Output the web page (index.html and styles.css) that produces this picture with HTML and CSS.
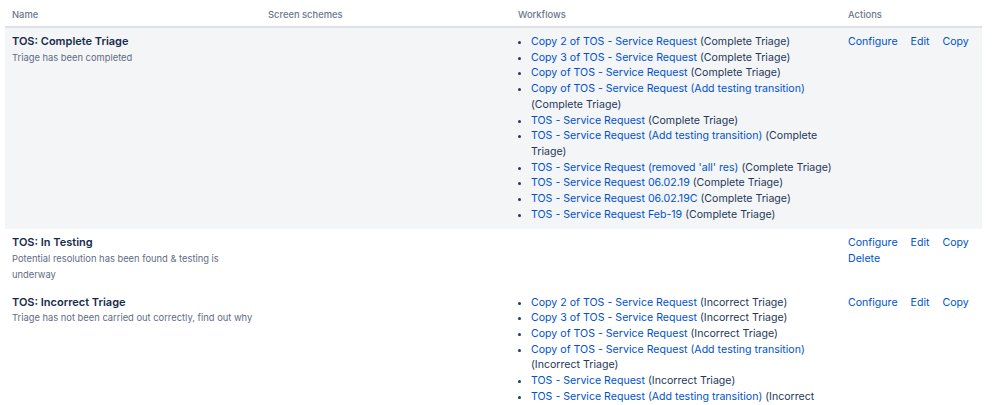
FILE: index.html
```html
<!DOCTYPE html>
<html lang="en">
<head>
<meta charset="utf-8">
<link rel="stylesheet" href="styles.css">
</head>
<body>
<table class="statuses">
  <thead>
    <tr>
      <th class="c-name">Name</th>
      <th class="c-screen">Screen schemes</th>
      <th class="c-wf">Workflows</th>
      <th class="c-act">Actions</th>
    </tr>
  </thead>
  <tbody>
    <tr class="shaded">
      <td class="c-name"><div class="title">TOS: Complete Triage</div><div class="desc">Triage has been completed</div></td>
      <td class="c-screen"></td>
      <td class="c-wf">
        <ul class="wf">
          <li><a href="#">Copy 2 of TOS - Service Request</a> (Complete Triage)</li>
          <li><a href="#">Copy 3 of TOS - Service Request</a> (Complete Triage)</li>
          <li><a href="#">Copy of TOS - Service Request</a> (Complete Triage)</li>
          <li><a href="#">Copy of TOS - Service Request (Add testing transition)</a> (Complete Triage)</li>
          <li><a href="#">TOS - Service Request</a> (Complete Triage)</li>
          <li><a href="#">TOS - Service Request (Add testing transition)</a> (Complete Triage)</li>
          <li><a href="#">TOS - Service Request (removed 'all' res)</a> (Complete Triage)</li>
          <li><a href="#">TOS - Service Request 06.02.19</a> (Complete Triage)</li>
          <li><a href="#">TOS - Service Request 06.02.19C</a> (Complete Triage)</li>
          <li><a href="#">TOS - Service Request Feb-19</a> (Complete Triage)</li>
        </ul>
      </td>
      <td class="c-act"><div class="actions"><a href="#">Configure</a><a href="#">Edit</a><a href="#">Copy</a></div></td>
    </tr>
    <tr>
      <td class="c-name"><div class="title">TOS: In Testing</div><div class="desc">Potential resolution has been found &amp; testing is underway</div></td>
      <td class="c-screen"></td>
      <td class="c-wf"></td>
      <td class="c-act"><div class="actions"><a href="#">Configure</a><a href="#">Edit</a><a href="#">Copy</a><a href="#">Delete</a></div></td>
    </tr>
    <tr>
      <td class="c-name"><div class="title">TOS: Incorrect Triage</div><div class="desc">Triage has not been carried out correctly, find out why</div></td>
      <td class="c-screen"></td>
      <td class="c-wf">
        <ul class="wf">
          <li><a href="#">Copy 2 of TOS - Service Request</a> (Incorrect Triage)</li>
          <li><a href="#">Copy 3 of TOS - Service Request</a> (Incorrect Triage)</li>
          <li><a href="#">Copy of TOS - Service Request</a> (Incorrect Triage)</li>
          <li><a href="#">Copy of TOS - Service Request (Add testing transition)</a> (Incorrect Triage)</li>
          <li><a href="#">TOS - Service Request</a> (Incorrect Triage)</li>
          <li><a href="#">TOS - Service Request (Add testing transition)</a> (Incorrect Triage)</li>
        </ul>
      </td>
      <td class="c-act"><div class="actions"><a href="#">Configure</a><a href="#">Edit</a><a href="#">Copy</a></div></td>
    </tr>
  </tbody>
</table>
</body>
</html>
```

FILE: styles.css
```css
html, body {
  margin: 0;
  background: #ffffff;
}
body {
  padding: 1px 17px 0 5px;
  font-family: Inter, "Noto Sans", sans-serif;
  font-size: 10.6px;
  line-height: 15.7px;
  color: #253858;
  overflow: hidden;
}
.statuses {
  width: 977px;
  border-collapse: collapse;
  table-layout: fixed;
}
.statuses th {
  text-align: left;
  font-weight: 500;
  font-size: 9.4px;
  color: #6b778c;
  padding: 6px 7px 4px;
  line-height: 15px;
  border-bottom: 2px solid #dfe1e6;
}
.statuses td {
  vertical-align: top;
  padding: 6px 7px 6px;
}
.statuses .shaded td {
  background: #f4f5f7;
  padding-bottom: 7px;
}
.c-name { width: 242px; }
.c-screen { width: 236px; }
.c-wf { width: 316px; }
.c-act { width: 127px; }
.title {
  font-weight: 600;
  font-size: 11px;
  color: #172b4d;
}
.desc {
  font-size: 9.35px;
  line-height: 15.7px;
  color: #5e6c84;
}
.wf {
  margin: 0;
  padding-left: 13px;
}
a {
  color: #0052cc;
  text-decoration: none;
}
.actions {
  display: flex;
  flex-wrap: wrap;
  column-gap: 13px;
}
```
